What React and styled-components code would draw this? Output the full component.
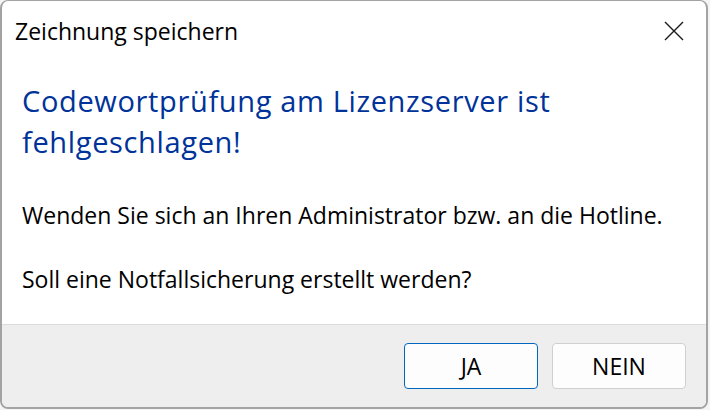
import React from "react";
import styled, { createGlobalStyle } from "styled-components";

const Global = createGlobalStyle`
  html, body {
    margin: 0;
    padding: 0;
    background: #f4f4f4;
  }
  body {
    font-family: "Open Sans", "Noto Sans", sans-serif;
  }
`;

const Window = styled.div`
  box-sizing: border-box;
  width: 708px;
  height: 409px;
  display: flex;
  flex-direction: column;
  background: #ffffff;
  border: 2px solid #a3a3a3;
  border-top-width: 1px;
  border-radius: 8px;
  overflow: hidden;
`;

const TitleBar = styled.div`
  display: flex;
  align-items: center;
  justify-content: space-between;
  height: 60px;
  padding: 0 22px 0 13px;
  flex-shrink: 0;
`;

const Title = styled.div`
  font-size: 23px;
  color: #000;
`;

const Close = styled.button`
  width: 20px;
  height: 20px;
  padding: 0;
  border: none;
  background: none;
  display: flex;
`;

const Content = styled.div`
  flex: 1;
  padding: 19px 20px 0 20px;
`;

const Heading = styled.h1`
  margin: 0;
  font-size: 29px;
  font-weight: 400;
  letter-spacing: 0.65px;
  line-height: 41px;
  color: #003399;
`;

const Text = styled.p`
  margin: ${(p) => p.top}px 0 0 0;
  font-size: 23px;
  line-height: 30px;
  color: #000;
`;

const Footer = styled.div`
  height: 82px;
  display: flex;
  align-items: center;
  justify-content: flex-end;
  gap: 14px;
  padding-right: 20px;
  background: #eeeeee;
  border-top: 1px solid #dcdcdc;
`;

const Button = styled.button`
  box-sizing: border-box;
  width: 134px;
  height: 46px;
  border-radius: 4px;
  background: #fdfdfd;
  border: 1px solid ${(p) => (p.primary ? "#0067c0" : "#d0d0d0")};
  font-family: inherit;
  font-size: 23px;
  color: #000;
`;

export default function App() {
  return (
    <>
      <Global />
      <Window>
        <TitleBar>
          <Title>Zeichnung speichern</Title>
          <Close aria-label="Schließen">
            <svg width="20" height="20" viewBox="0 0 20 20">
              <path d="M1 1 L19 19 M19 1 L1 19" stroke="#1a1a1a" strokeWidth="1.4" fill="none" />
            </svg>
          </Close>
        </TitleBar>
        <Content>
          <Heading>Codewortprüfung am Lizenzserver ist fehlgeschlagen!</Heading>
          <Text top={38}>Wenden Sie sich an Ihren Administrator bzw. an die Hotline.</Text>
          <Text top={34}>Soll eine Notfallsicherung erstellt werden?</Text>
        </Content>
        <Footer>
          <Button primary>JA</Button>
          <Button>NEIN</Button>
        </Footer>
      </Window>
    </>
  );
}
